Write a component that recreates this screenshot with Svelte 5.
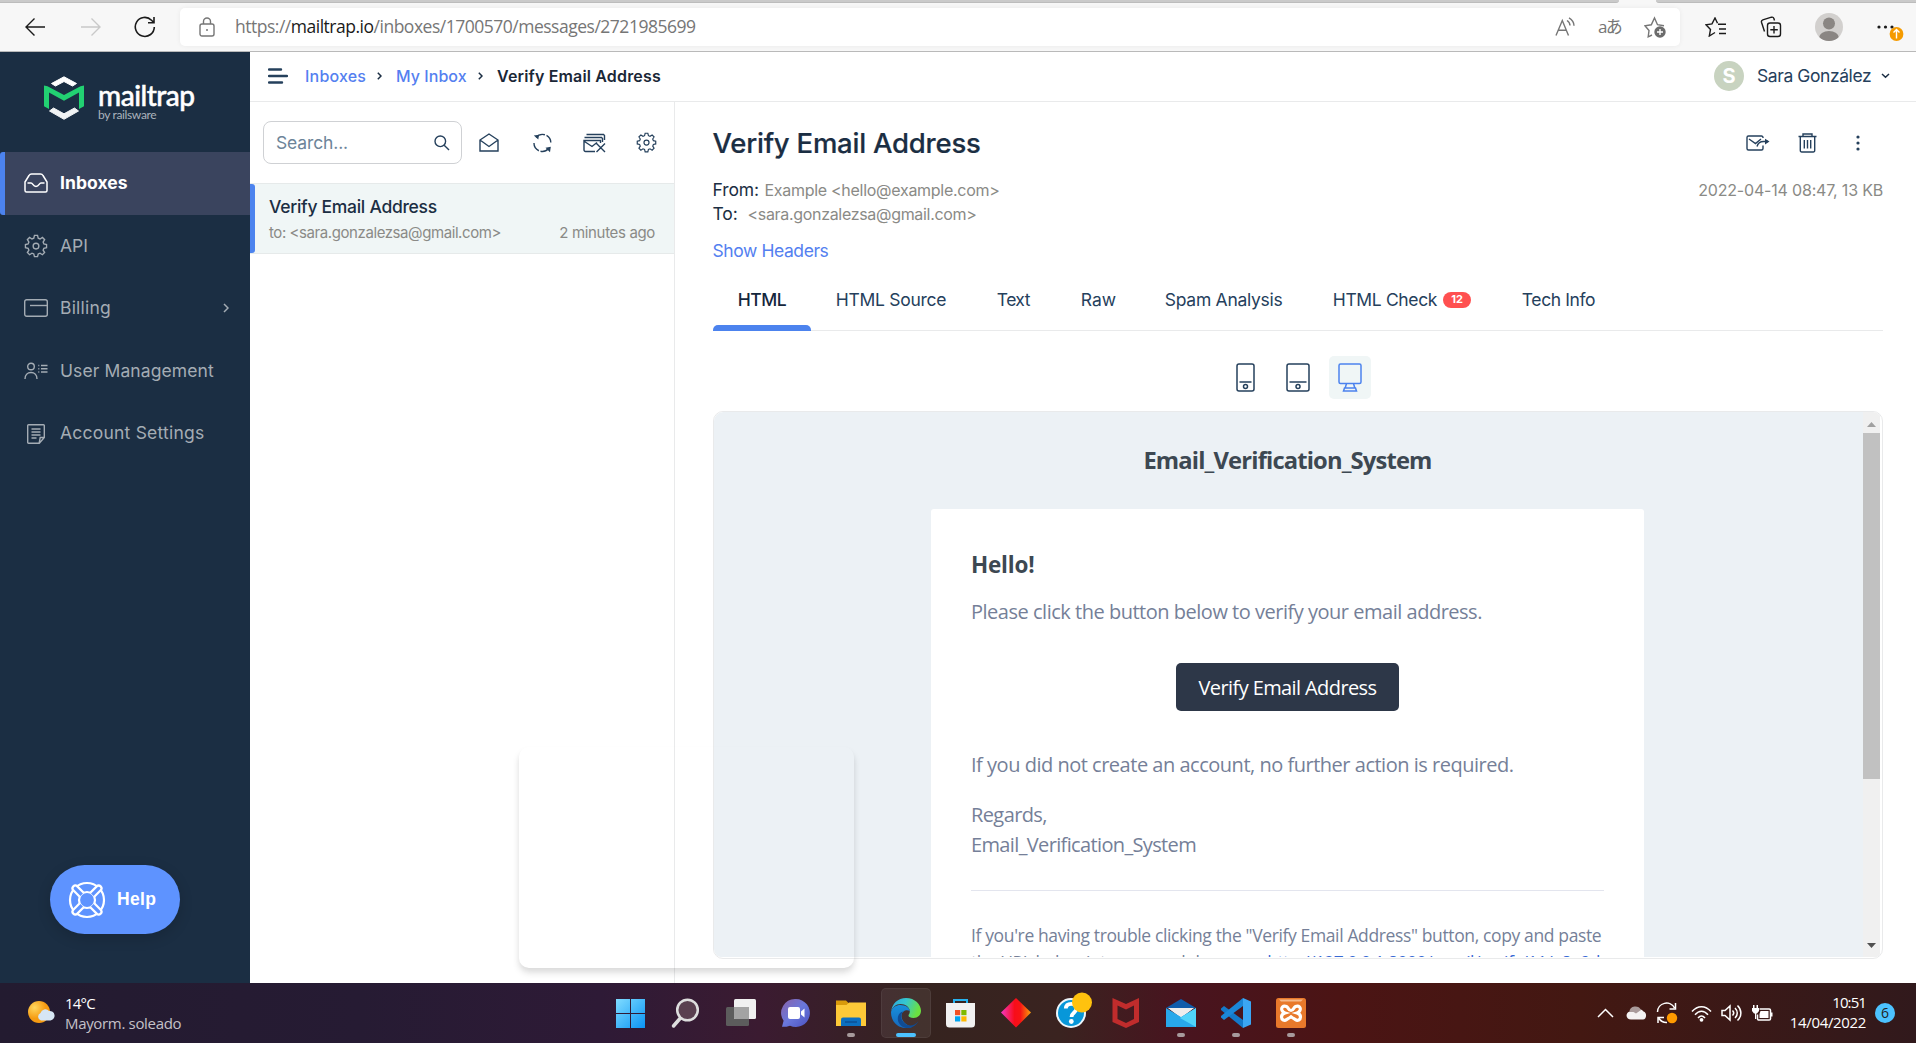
<script>
  const nav = [
    { id: 'api', label: 'API', cls: 'api' },
    { id: 'billing', label: 'Billing', cls: 'billing', arrow: true },
    { id: 'users', label: 'User Management', cls: 'users' },
    { id: 'settings', label: 'Account Settings', cls: 'settings' }
  ];
  const tabs = [
    { label: 'HTML', cls: 'html', active: true },
    { label: 'HTML Source', cls: 'source' },
    { label: 'Text', cls: 'text' },
    { label: 'Raw', cls: 'raw' },
    { label: 'Spam Analysis', cls: 'spam' },
    { label: 'HTML Check', cls: 'check', badge: '12' },
    { label: 'Tech Info', cls: 'tech' }
  ];
  const gear =
    'M10.4 1.5h3.2l.7 2.9 1.9.8 2.5-1.6 2.3 2.3-1.6 2.5.8 1.9 2.8.7v3.2l-2.8.7-.8 1.9 1.6 2.5-2.3 2.3-2.5-1.6-1.9.8-.7 2.8h-3.2l-.7-2.8-1.9-.8-2.5 1.6L3 19.3l1.6-2.5-.8-1.9-2.8-.7V11l2.8-.7.8-1.9L3 5.9l2.3-2.3 2.5 1.6 1.9-.8z';
</script>

<div class="screen">
  <header class="browser">
    <div class="strip"><span class="seg a"></span><span class="seg b"></span></div>
    <div class="toolbar">
      <svg class="back" width="22" height="20" viewBox="0 0 22 20"><path d="M21 10H2M10.5 1.500L2 10l8.500 8.500" /></svg>
      <svg class="fwd" width="22" height="20" viewBox="0 0 22 20"><path d="M1 10h19M11.500 1.500L20 10l-8.500 8.500" /></svg>
      <svg class="reload" width="22" height="22" viewBox="0 0 22 22"><path d="M20.300 11A9.500 9.500 0 1 1 17.500 4.200L19.800 6.500M20 1v5.800h-6" /></svg>
      <div class="address">
        <svg class="lock" width="16" height="20" viewBox="0 0 16 20"><rect x="1" y="7" width="14" height="12" rx="2" /><path d="M4.500 7V4.500a3.500 3.500 0 0 1 7 0V7" /><circle cx="8" cy="13" r="1" class="dot" /></svg>
        <span class="url">https://<b>mailtrap.io</b>/inboxes/1700570/messages/2721985699</span>
        <svg class="read" width="21" height="20" viewBox="0 0 21 20"><path d="M1 18.500L7.300 3.500l6.200 15M3.300 13.300h8M12 3.500c2 1.200 3 3 3 5M14 .8c3.200 1.800 5 4.500 5 8" /></svg>
        <span class="aa">aあ</span>
        <svg class="star" width="22" height="22" viewBox="0 0 22 22"><path d="M8 19l-3.800 1.800.8-6.300L1 9.800l6.300-1L10.500 2l3 6.700 6.500 1" /><circle cx="16" cy="16" r="5.700" class="plus-bg" /><path class="plus" d="M16 13v6M13 16h6" /></svg>
      </div>
      <svg class="fav" width="22" height="20" viewBox="0 0 22 20"><path d="M13 7.300h8M14 12h7M14 16.500h7M10 15.500L4.300 19l1.200-6.500L1 7.800l6-.9L10 1l2.500 5.300" /></svg>
      <svg class="coll" width="22" height="22" viewBox="0 0 22 22"><path d="M4.500 15.500L1.500 6.300a2 2 0 0 1 1.300-2.400L11.500 1.200a2 2 0 0 1 2.400 1.300l.6 2" /><rect x="7.500" y="7" width="13" height="13.500" rx="2.500" /><path d="M14 10v7.500M10.300 13.700h7.500" /></svg>
      <svg class="person" width="28" height="28" viewBox="0 0 28 28"><clipPath id="pc"><circle cx="14" cy="14" r="14" /></clipPath><g clip-path="url(#pc)"><rect width="28" height="28" fill="#d2d0ce" /><circle cx="14" cy="10.500" r="6" fill="#8a8683" /><ellipse cx="14" cy="25" rx="10" ry="7" fill="#8a8683" /></g></svg>
      <svg class="more" width="28" height="26" viewBox="0 0 28 26"><circle cx="3" cy="9" r="1.600" /><circle cx="9.500" cy="9" r="1.600" /><circle cx="16" cy="9" r="1.600" /><circle cx="20.500" cy="16" r="6.900" fill="#f59b00" /><path d="M20.500 20.500v-8.500M17.500 14.500l3-3 3 3" fill="none" stroke="#fff" stroke-width="1.400" /></svg>
    </div>
  </header>

  <div class="app">
    <aside class="side">
      <div class="logo">
        <svg width="40" height="46" viewBox="0 0 40 46">
          <path d="M7.500 8.500L20 1.800l12.500 6.700L28.500 11 20 6.500 11.500 11z" fill="#fff" stroke="#fff" stroke-linejoin="round" />
          <path d="M5.500 36L20 44.300 34.500 36l-4-3-10.500 5.800L9.500 33z" fill="#f1f3f4" stroke="#f1f3f4" stroke-linejoin="round" />
          <path d="M0 10.500l3.500.8L20 20l16.500-8.700 3.500-.8v20.800l-5 2.700V17.500L20 25.800 5 17.500V34l-5-2.700z" fill="#22d172" />
        </svg>
        <div class="words"><span class="name">mailtrap</span><span class="by">by railsware</span></div>
      </div>
      <nav>
        <a class="row active" href="#inboxes">
          <svg width="24" height="20" viewBox="0 0 24 20"><path d="M1 9l4-6.500A3 3 0 0 1 7.500 1h9A3 3 0 0 1 19 2.500L23 9v8.500a1.500 1.500 0 0 1-1.500 1.500h-19A1.500 1.500 0 0 1 1 17.500zM3.500 10H7c2 0 1.800 3.500 5 3.500S15 10 17 10h3.500" /></svg>
          <span>Inboxes</span>
        </a>
        {#each nav as n}
          <a class="row {n.cls}" href="#{n.id}">
            {#if n.id === 'api'}
              <svg width="24" height="24" viewBox="0 0 24 25"><path d={gear} /><circle cx="12" cy="12.600" r="3" /></svg>
            {:else if n.id === 'billing'}
              <svg width="24" height="18" viewBox="0 0 24 18"><rect x=".7" y=".7" width="22.600" height="16.600" rx="2" /><path d="M6 6.500h17" /></svg>
            {:else if n.id === 'users'}
              <svg width="24" height="18" viewBox="0 0 24 18"><circle cx="7" cy="4.500" r="3.300" /><path d="M1 17c0-4 2.500-6.500 6-6.500s6 2.500 6 6.500M17 3.500h6.500M17 6.700h6.500M17 10h6.500M14.300 3.500h1M14.300 6.700h1M14.300 10h1" /></svg>
            {:else}
              <svg width="24" height="20" viewBox="0 0 24 20"><path d="M4.500.7h15A.8.8 0 0 1 20.300 1.500v12l-5 5.800H4.500a.8.8 0 0 1-.8-.8v-17A.8.8 0 0 1 4.500.7zM7.500 5h9M7.500 8h9M7.500 11h9M7.500 14h5M20 13.500h-3.800l-1 5.500" /></svg>
            {/if}
            <span>{n.label}</span>
            {#if n.arrow}<svg class="arrow" width="6" height="10" viewBox="0 0 6 10"><path d="M1 1l4 4-4 4" /></svg>{/if}
          </a>
        {/each}
      </nav>
      <button class="help">
        <svg width="38" height="38" viewBox="0 0 38 38"><circle cx="19" cy="19" r="17" /><circle cx="19" cy="19" r="8" />
          <g class="straps">
            {#each [45, 135, 225, 315] as a}<path transform="rotate({a} 19 19)" d="M16.200 11.500V2.500a2.800 2.800 0 0 1 5.600 0v9" />{/each}
          </g>
        </svg>
        <span>Help</span>
      </button>
    </aside>

    <div class="main">
      <div class="top">
        <svg class="burger" width="20" height="16" viewBox="0 0 20 16"><path d="M1 1.500h12M1 8h18M1 14.500h13" /></svg>
        <a class="c1" href="#i">Inboxes</a>
        <svg class="sep" width="5" height="8" viewBox="0 0 5 8"><path d="M.8.800L4 4 .8 7.200" /></svg>
        <a class="c2" href="#m">My Inbox</a>
        <svg class="sep" width="5" height="8" viewBox="0 0 5 8"><path d="M.8.800L4 4 .8 7.200" /></svg>
        <strong>Verify Email Address</strong>
        <span class="avatar">S</span>
        <span class="who">Sara González</span>
        <svg class="down" width="9" height="6" viewBox="0 0 9 6"><path d="M1 1l3.500 3.300L8 1" /></svg>
      </div>

      <div class="split">
        <section class="list">
          <div class="tools">
            <div class="search"><span>Search...</span><svg width="16" height="16" viewBox="0 0 16 16"><circle cx="6.300" cy="6.300" r="5.300" /><path d="M10.200 10.200L15 15" /></svg></div>
            <svg class="i1" width="20" height="20" viewBox="0 0 20 20"><path d="M1 7L10 1l9 6V18H1zM1 7l9 6.500L19 7" /></svg>
            <svg class="i2" width="19" height="20" viewBox="0 0 19 20"><path d="M3.200 4.500A8.200 8.200 0 0 1 17.800 9.500M1 10a8.200 8.200 0 0 0 14.500 5.500" stroke-dasharray="9.500 1.800" /><path class="fill" d="M.8 2.500l5.200-.8L5.300 6.500zM17.800 13.800l-5.300 1 4.500 4.500z" /></svg>
            <svg class="i3" width="23" height="20" viewBox="0 0 23 20"><path d="M12 18.500H2.500A1.500 1.500 0 0 1 1 17V7.500h16.500V10M1.500 8.500l7.500 5 5-4M1.500 4.500h17l1 1V9M3.500 1.500h17l1 1V7M13.500 10.500l8.500 8.500M22 10.500L13.500 19" /></svg>
            <svg class="i4" width="21" height="21" viewBox="0 0 24 25"><path d={gear} /><circle cx="12" cy="12.600" r="3" /></svg>
          </div>
          <article class="item">
            <h3>Verify Email Address</h3>
            <div class="sub"><span class="to">to: &lt;sara.gonzalezsa@gmail.com&gt;</span><span class="ago">2 minutes ago</span></div>
          </article>
        </section>

        <section class="message">
          <div class="head">
            <h1>Verify Email Address</h1>
            <svg class="m1" width="24" height="16" viewBox="0 0 24 16"><path d="M17 3V2.500A1.500 1.500 0 0 0 15.500 1h-13A1.500 1.500 0 0 0 1 2.500v11A1.500 1.500 0 0 0 2.500 15h13a1.500 1.500 0 0 0 1.500-1.500v-3M3 4l6.500 4.500L15 4M11 11.500c1-3.500 3.500-5 6.500-5H22" /><path class="fill" d="M19 3.800L23.500 6.500 19 9.500z" /></svg>
            <svg class="m2" width="19" height="20" viewBox="0 0 19 20"><path d="M.5 3.500h18M5 3V1h9v2M2.300 3.500v13.800A1.500 1.500 0 0 0 3.800 19h11.400a1.500 1.500 0 0 0 1.500-1.700V3.500M6.300 7v8.500M9.500 7v8.500M12.700 7v8.500" /></svg>
            <svg class="m3" width="4" height="16" viewBox="0 0 4 16"><circle cx="2" cy="2" r="1.600" /><circle cx="2" cy="8" r="1.600" /><circle cx="2" cy="14" r="1.600" /></svg>
          </div>
          <div class="meta"><span class="k">From:</span><span class="v from">Example &lt;hello@example.com&gt;</span><span class="date">2022-04-14 08:47, 13 KB</span></div>
          <div class="meta second"><span class="k">To:</span><span class="v rcpt">&lt;sara.gonzalezsa@gmail.com&gt;</span></div>
          <a class="headers" href="#h">Show Headers</a>
          <div class="tabs">
            {#each tabs as t}
              <span class="tab {t.cls}" class:active={t.active}>{t.label}{#if t.badge}<em>{t.badge}</em>{/if}</span>
            {/each}
          </div>
          <div class="devices">
            <span><svg width="20" height="30" viewBox="0 0 20 30"><rect x="1" y="1" width="17" height="27" rx="2" /><path d="M3.500 19h12" /><circle cx="9.500" cy="23.500" r="2" /></svg></span>
            <span><svg width="24" height="30" viewBox="0 0 24 30"><rect x="1" y="1" width="22" height="27" rx="2" /><path d="M3.500 19h17" /><circle cx="12" cy="23.500" r="2" /></svg></span>
            <span class="on"><svg width="24" height="30" viewBox="0 0 24 30"><rect x="1" y="1" width="22" height="19.500" rx="1.500" /><path d="M8.500 20.500l-1.300 4.500h9.600l-1.300-4.500M6.500 25h11l1 3h-13z" /></svg></span>
          </div>
          <div class="frame">
            <div class="email">
              <h2>Email_Verification_System</h2>
              <div class="card">
                <h4>Hello!</h4>
                <p class="p1">Please click the button below to verify your email address.</p>
                <button>Verify Email Address</button>
                <p class="p2">If you did not create an account, no further action is required.</p>
                <p class="p3">Regards,<br /><span>Email_Verification_System</span></p>
                <hr />
                <p class="small">If you're having trouble clicking the "Verify Email Address" button, copy and paste<br /><span>the URL below into your web browser: <a href="#v">http://127.0.0.1:8000/email/verify/11/e8a9d</a></span></p>
              </div>
            </div>
            <div class="scroll">
              <svg width="9" height="5" viewBox="0 0 9 5"><path d="M4.500 0L9 5H0z" fill="#a0a0a0" /></svg>
              <i></i>
              <svg class="dn" width="9" height="5" viewBox="0 0 9 5"><path d="M0 0h9L4.500 5z" fill="#505050" /></svg>
            </div>
          </div>
        </section>
      </div>
    </div>
  </div>

  <div class="ghost"></div>

  <footer class="taskbar">
    <div class="weather">
      <svg width="27" height="26" viewBox="0 0 27 26"><defs><radialGradient id="sun" cx=".3" cy=".3"><stop offset="0" stop-color="#ffd75e" /><stop offset="1" stop-color="#f59b12" /></radialGradient></defs><circle cx="11" cy="12" r="11" fill="url(#sun)" /><path d="M13 20.500a4 4 0 0 1-.5-7.500 5 5 0 0 1 8.500-2 4.800 4.800 0 0 1 1.500 9.500z" fill="#d6e6f4" /></svg>
      <div><span class="deg">14°C</span><span class="cond">Mayorm. soleado</span></div>
    </div>

    <div class="apps">
      <span class="slot"><svg viewBox="0 0 30 30"><defs><linearGradient id="win" x1="0" y1="0" x2="1" y2="1"><stop offset="0" stop-color="#80dcff" /><stop offset="1" stop-color="#0a94f5" /></linearGradient></defs><path d="M0 1h14v14H0zM15 1h14v14H15zM0 16h14v14H0zM15 16h14v14H15z" fill="url(#win)" /></svg></span>
      <span class="slot"><svg viewBox="0 0 30 30"><circle cx="16.500" cy="12" r="10.300" fill="#5a4050" stroke="#dedede" stroke-width="2.500" /><path d="M2.500 28L9 20.500" stroke="#dedede" stroke-width="3.500" stroke-linecap="round" /></svg></span>
      <span class="slot"><svg viewBox="0 0 30 30"><rect x="0" y="9" width="23" height="19" rx="1.500" fill="#5c5c5c" /><rect x="8" y="1" width="22" height="20" rx="1.500" fill="#f0f0f0" /><path d="M8 9h15v12H9.500A1.500 1.500 0 0 1 8 19.500z" fill="#a3a3a3" /></svg></span>
      <span class="slot"><svg viewBox="0 0 30 30"><defs><linearGradient id="chat" x1="0" y1="0" x2="1" y2="1"><stop offset="0" stop-color="#8a62a8" /><stop offset=".5" stop-color="#6a78dc" /><stop offset="1" stop-color="#4b50c0" /></linearGradient></defs><path d="M15 1a14 14 0 1 1-6 26.700C6 28.800 3 29 1 28.800l1.600-6A14 14 0 0 1 15 1z" fill="url(#chat)" /><rect x="7" y="9" width="12" height="12" rx="2" fill="#fff" /><path d="M20 13.500l3.500-3v9l-3.500-3z" fill="#fff" /></svg></span>
      <span class="slot run"><svg viewBox="0 0 30 30"><path d="M0 2.500h10l3 3V9H0z" fill="#d99a0b" /><path d="M0 7h10.500l2.500-2.500H30V28H0z" fill="#fdc938" /><path d="M5 28v-6.500a2 2 0 0 1 2-2h16a2 2 0 0 1 2 2V28z" fill="#0c6fc0" /><path d="M9 24h12" stroke="#0b4f96" stroke-width="1.500" /></svg></span>
      <span class="slot current"><svg viewBox="0 0 30 30"><defs><linearGradient id="eg" x1="0" y1="0" x2="1" y2=".3"><stop offset="0" stop-color="#2aa5e0" /><stop offset=".5" stop-color="#35c7d0" /><stop offset="1" stop-color="#6be03f" /></linearGradient><linearGradient id="eb" x1="0" y1="0" x2="0" y2="1"><stop offset="0" stop-color="#1790dc" /><stop offset="1" stop-color="#1668bc" /></linearGradient></defs><path d="M0 14C1 5.500 7 0 15 0c9 0 15 6.500 15 12.800 0 4.400-3.300 7.200-7.500 7.200-4 0-5-1.800-5-2.600 0-1 1.300-1.300 1.300-4.200 0-4-4.300-7.200-9.300-7.200C5 6 1 9.500 0 14z" fill="url(#eg)" /><path d="M0 14c1-4.500 5-7 9.500-7 5 0 9.300 2.800 9.300 6.200-2-2.200-8.300-1-8.300 4.800 0 6 6 9.800 10.500 11-9 3.500-21-1.500-21-15z" fill="url(#eb)" /><path d="M12.500 13.500c-4 3-2.500 9.500 2 12.500 4 2.500 9 2 13-3-4 7-9.500 7.500-13.500 6.800-5.500-2-8-6.800-7-11 .6-3 2.500-4.800 5.500-5.300z" fill="#0f4c94" /></svg></span>
      <span class="slot"><svg viewBox="0 0 30 30"><path d="M8 6V2h13v4" fill="none" stroke="#28b2ef" stroke-width="2" /><path d="M0 5h29v21a3.500 3.500 0 0 1-3.500 3.500h-22A3.500 3.500 0 0 1 0 26z" fill="#f1f1f1" /><path d="M9 12h5.200v5.200H9z" fill="#f25022" /><path d="M15.300 12h5.200v5.200h-5.200z" fill="#7fba00" /><path d="M9 18.300h5.200v5.200H9z" fill="#00a4ef" /><path d="M15.300 18.300h5.200v5.200h-5.200z" fill="#ffb900" /></svg></span>
      <span class="slot"><svg viewBox="0 0 30 30"><defs><linearGradient id="dia"><stop offset="0" stop-color="#f339c4" /><stop offset=".45" stop-color="#f70d1a" /><stop offset=".65" stop-color="#f71414" /><stop offset="1" stop-color="#fba20b" /></linearGradient></defs><path d="M15 0l15 14.500L15 29.500 0 14.500z" fill="url(#dia)" /></svg></span>
      <span class="slot"><svg class="q" viewBox="0 0 30 30"><circle cx="15" cy="15" r="14" fill="#0797d9" stroke="#eef6fa" stroke-width="2" /><path d="M9.800 10.500c.2-3.200 2.400-4.700 5.400-4.700 3 0 5.300 1.800 5.300 4.600 0 4.100-4.900 4-5 8.600" fill="none" stroke="#fff" stroke-width="3.800" /><circle cx="15.300" cy="23.500" r="2.400" fill="#fff" /><circle cx="26" cy="4.500" r="10" fill="#ffc20e" /></svg></span>
      <span class="slot"><svg viewBox="0 0 30 30"><path d="M1.500 0L15 6l13-6v24L15 30 1.500 24zM6.500 7.500V21l8.500 4 8-4V7.500l-8 4z" fill="#c02c2c" fill-rule="evenodd" /></svg></span>
      <span class="slot run"><svg viewBox="0 0 30 30"><path d="M0 10L15 1l15 9z" fill="#0f5cab" /><path d="M2 10h26L15 20z" fill="#f2f2f2" /><path d="M0 10l15 9 15-9v19H0z" fill="#28a8ea" /><path d="M2.500 10h25L15 18.500z" fill="#ededed" /><path d="M30 10L14 20l16 9z" fill="#50d4fa" /></svg></span>
      <span class="slot run"><svg viewBox="0 0 30 30"><path d="M0 10.500L3 8l19 14v8L0 12z" fill="#1479c9" /><path d="M0 19.500L3 22 22 8V0L0 18z" fill="#1b87d8" /><path d="M22 0l8 3.500v23L22 30z" fill="#3ba6f3" /></svg></span>
      <span class="slot run"><svg viewBox="0 0 30 30"><rect width="30" height="30" rx="2.500" fill="#e8792b" /><path d="M3 1.500h24l-2 2H5z" fill="#f6b98a" /><path d="M10.500 8.500c-3.500-1.300-5.500 1-4.500 3.800.8 2 3 2.700 3 2.700s-3.500 1-3.500 4 3 4 5 2.700 4.500-3 4.500-3 2.500 1.700 4.500 3 5 .3 5-2.700-3.500-4-3.500-4 2.200-.7 3-2.700c1-2.800-1-5.100-4.500-3.800-2 .8-1.500 4-4.500 4s-2.500-3.200-4.500-4z" fill="none" stroke="#fff" stroke-width="3.200" /></svg></span>
    </div>

    <div class="tray">
      <svg class="t1" width="17" height="10" viewBox="0 0 17 10"><path d="M1 9l7.500-7.500L16 9" /></svg>
      <svg class="t2" width="21" height="14" viewBox="0 0 21 14"><path class="cl2" d="M8 6c2-3 7-4 9.500-.5C21 6 21 13.500 17 13.500H5C-.5 13.500-1 6.500 4 5.500c2-.3 3 0 4 .5z" /><path class="cl1" d="M3.500 6a5 5 0 0 1 5-5.500C11 .2 14 1 15 4L10 7.500 7.500 6z" /></svg>
      <svg class="t3" width="22" height="22" viewBox="0 0 22 22"><path d="M1.500 10A9 9 0 0 1 18.500 6M19.500 1v6h-6M2 21v-5.500h6M3 16.500a9 9 0 0 0 8 4" /><circle cx="16" cy="16" r="5.200" /></svg>
      <svg class="t4" width="21" height="17" viewBox="0 0 21 17"><path d="M1 6.500c5.500-6.500 13.500-6.500 19 0M4 9.800c4-4.800 9-4.800 13 0M7 13c2.300-2.700 4.700-2.700 7 0" /><circle cx="10.500" cy="14.800" r="1.900" /></svg>
      <svg class="t5" width="21" height="18" viewBox="0 0 21 18"><path d="M1 6.500h3L9 2v14l-5-4.500H1zM11.500 6.500c1.500 1.500 1.500 3.500 0 5M14 4c3 3 3 7 0 10M16.500 1.500c4.500 4.500 4.500 10.500 0 15" /></svg>
      <svg class="t6" width="21" height="16" viewBox="0 0 21 16"><path d="M7.500 4h9.700A1.300 1.300 0 0 1 18.500 5.300v8.400A1.300 1.300 0 0 1 17.200 15H6.800A1.300 1.300 0 0 1 5.500 13.700V9.500" /><path class="fill" d="M8.500 6h8v7h-9v-4zM19 7.500h1.500v4H19zM0 3h7v3L5 8.500H2L0 6zM1 0h1.500v3H1zM4.500 0H6v3H4.500zM3 8h1.200v6H3z" /></svg>
      <div class="clock"><span class="time">10:51</span><span class="day">14/04/2022</span></div>
      <span class="count">6</span>
    </div>
  </footer>
</div>

<style>
  :global(body) { background: #fff; overflow: hidden; }
  * { box-sizing: border-box; }
  h1, h2, h3, h4, p { margin: 0; }
  a { text-decoration: none; }
  svg { flex: none; fill: none; }
  .screen { position: relative; width: 1916px; height: 1043px; display: flex; flex-direction: column; overflow: hidden; font-family: Inter, "Liberation Sans", sans-serif; white-space: nowrap; }

  /* browser chrome */
  .browser { height: 52px; background: #f7f7f7; border-bottom: 1px solid #b9b9b9; display: flex; flex-direction: column; }
  .strip { height: 3px; display: flex; justify-content: space-between; }
  .seg { background: #cacaca; border-bottom: 1px solid #bcbcbc; }
  .seg.a { width: 1619px; border-bottom-right-radius: 3px; }
  .seg.b { width: 260px; border-bottom-left-radius: 3px; }
  .toolbar { flex: 1; display: flex; align-items: center; padding: 0 0 1px 24px; }
  .toolbar svg { stroke: #1b1b1b; stroke-width: 1.400; }
  .toolbar .fwd { stroke: #c9c9c9; margin-left: 34px; }
  .toolbar .reload { margin-left: 32px; stroke-width: 1.600; }
  .address { width: 1500px; height: 38px; margin: 0 0 0 24px; background: #fff; border-radius: 5px; box-shadow: 0 0 5px rgba(0,0,0,.06); display: flex; align-items: center; }
  .address svg { stroke: #767676; }
  .address .lock { margin-left: 19px; }
  .lock .dot { fill: #767676; stroke: none; }
  .url { width: 464px; margin-left: 20px; padding-bottom: 1px; font: 17.5px "Open Sans", sans-serif; letter-spacing: -.489px; color: #767676; }
  .url b { font-weight: 400; color: #1a1a1a; }
  .address .read { margin-left: 856px; }
  .aa { width: 23px; margin-left: 22px; font: 17px "Open Sans", "Noto Sans CJK JP", sans-serif; color: #767676; line-height: 20px; letter-spacing: -1.800px; }
  .address .star { margin-left: 23px; }
  .star .plus-bg { fill: #6b6b6b; stroke: none; }
  .star .plus { stroke: #fff; }
  .fav { margin-left: 25px; }
  .coll { margin-left: 33px; }
  .toolbar .person { margin-left: 33px; stroke: none; }
  .toolbar .more { margin-left: 33px; stroke: none; fill: #1b1b1b; margin-top: 8px; }

  .app { flex: 1; display: flex; min-height: 0; }

  /* sidebar */
  .side { width: 250px; background: #1b2e43; display: flex; flex-direction: column; }
  .logo { height: 100px; display: flex; align-items: flex-start; padding: 23px 0 0 44px; }
  .words { display: flex; flex-direction: column; margin-left: 14px; color: #fff; font-family: Lato, sans-serif; }
  .name { font-size: 28px; font-weight: 500; line-height: 28px; margin-top: 6px; letter-spacing: -.5px; -webkit-text-stroke: .5px #fff; }
  .by { font-size: 12px; line-height: 11px; color: #aab3bc; letter-spacing: -.35px; }
  nav { display: flex; flex-direction: column; }
  .row { height: 62.600px; display: flex; align-items: center; padding-left: 24px; gap: 12px; color: #a4acb4; font-size: 17.5px; }
  .row span { padding-bottom: 2px; }
  .row.api span { padding-bottom: 0; }
  .row svg { stroke: #a4acb4; stroke-width: 1.400; }
  .row.active { background: #3a445e; color: #fff; font-weight: 700; border-left: 5px solid #4c83ee; padding-left: 19px; border-radius: 3px 0 0 3px; letter-spacing: .05px; }
  .row.active svg { stroke: #fff; stroke-width: 1.500; }
  .billing { letter-spacing: .2px; }
  .users { letter-spacing: .1px; }
  .settings { letter-spacing: .22px; }
  .row .arrow { margin-left: auto; margin-right: 21px; stroke-width: 1.500; }
  .help { margin: auto 0 49px 50px; width: 130px; height: 69px; border: 0; border-radius: 35px; background: #5e93ff; box-shadow: 0 4px 14px rgba(0,0,0,.16); display: flex; align-items: center; padding: 0 0 0 18px; gap: 11px; color: #fff; font: 700 17.5px "Liberation Sans", sans-serif; letter-spacing: .3px; }
  .help svg { stroke: #fff; stroke-width: 2.200; }
  .straps path { fill: #5e93ff; }

  /* top bar */
  .main { flex: 1; display: flex; flex-direction: column; min-width: 0; }
  .top { height: 50px; border-bottom: 1px solid #e9eaeb; display: flex; align-items: center; padding: 0 0 2px 18px; font-size: 16px; font-weight: 500; }
  .top svg { stroke: #1b2e43; stroke-width: 1.500; }
  .top .burger { stroke-width: 2.400; stroke: #25405c; stroke-linecap: round; }
  .top a { color: #5480f0; font-weight: 500; }
  .c1 { margin-left: 17px; width: 60px; letter-spacing: .2px; }
  .c2 { width: 70px; letter-spacing: .05px; }
  .sep { margin: 0 14px 0 12px; }
  .top strong { font-weight: 600; color: #1a2737; letter-spacing: .16px; }
  .avatar { margin-left: auto; width: 30px; height: 30px; border-radius: 50%; background: #c8d3c0; color: #fff; font: 700 20px/30px Inter, sans-serif; text-align: center; }
  .who { margin-left: 13px; width: 115px; font-size: 17.5px; font-weight: 400; letter-spacing: -.42px; color: #25405c; }
  .down { margin: 0 26px 0 9px; }

  .split { flex: 1; display: flex; min-height: 0; }

  /* message list */
  .list { width: 425px; border-right: 1px solid #e9eaeb; }
  .tools { height: 81px; display: flex; align-items: center; padding-left: 13px; }
  .tools svg { stroke: #25405c; stroke-width: 1.400; }
  .fill { fill: #25405c; stroke: none; }
  .search { width: 199px; height: 43px; border: 1px solid #cfd1d4; border-radius: 8px; display: flex; align-items: center; justify-content: space-between; padding: 0 11px 0 12px; font-size: 17.5px; letter-spacing: -.14px; color: #6d8499; }
  .i1 { margin-left: 17px; }
  .i2 { margin-left: 34px; }
  .i3 { margin-left: 31px; }
  .i4 { margin-left: 30px; }
  .item { height: 71px; background: #f0f6f6; border-top: 1px solid #e6eaea; border-bottom: 1px solid #e6eaea; padding: 11px 19px 0 19px; position: relative; }
  .item::before { content: ""; position: absolute; left: 0; top: 0; width: 5px; height: 69px; background: #4c83ee; border-radius: 0 3px 3px 0; }
  h3 { font-size: 17.5px; font-weight: 500; line-height: 23px; letter-spacing: -.28px; color: #1b2e43; }
  .sub { display: flex; justify-content: space-between; margin-top: 4px; font-size: 15px; line-height: 22px; color: #8a8a86; }
  .to { letter-spacing: -.42px; }
  .ago { letter-spacing: -.345px; }

  /* message pane */
  .message { flex: 1; padding: 6px 33px 0 38px; display: flex; flex-direction: column; }
  .head { height: 70px; display: flex; align-items: center; }
  .head svg { stroke: #25405c; stroke-width: 1.400; }
  h1 { flex: 1; font-size: 27.5px; font-weight: 500; letter-spacing: -.23px; color: #1b2e43; -webkit-text-stroke: .2px #1b2e43; text-indent: -.5px; }
  .m2 { margin-left: 28px; }
  .head .m3 { margin: 0 23px 0 39px; fill: #25405c; stroke: none; }
  .meta { height: 24px; display: flex; align-items: center; text-indent: -.5px; }
  .k { width: 52px; font-size: 17.5px; letter-spacing: -.11px; color: #1b2e43; line-height: 22px; padding-bottom: 1px; }
  .second .k { width: 35px; }
  .v { font-size: 16px; color: #8a8a86; }
  .from { letter-spacing: -.285px; }
  .rcpt { letter-spacing: -.315px; }
  .date { margin-left: auto; font-size: 16px; letter-spacing: -.186px; color: #8a8a86; }
  .headers { margin-top: 13px; line-height: 24px; font-size: 17.5px; letter-spacing: -.42px; color: #5480f0; text-indent: -.5px; }
  .tabs { margin-top: 6px; height: 62px; border-bottom: 1px solid #e9eaeb; display: flex; }
  .tab { display: flex; align-items: center; padding: 0 0 2px 24.800px; font-size: 17.5px; color: #25405c; letter-spacing: -.28px; height: 62px; position: relative; }
  .html { width: 98px; font-weight: 500; color: #14263c; letter-spacing: -.475px; }
  .html::after { content: ""; position: absolute; left: 0; right: 0; bottom: 0; height: 6px; background: #4c83ee; border-radius: 5px 5px 0 0; }
  .source { width: 161px; }
  .text { width: 84px; letter-spacing: -.6px; }
  .raw { width: 84px; letter-spacing: 0; }
  .spam { width: 168px; }
  .check { width: 189px; letter-spacing: -.362px; }
  .tech { letter-spacing: -.4px; }
  .tab em { margin: 1px 0 0 6px; width: 28px; height: 16px; border-radius: 8px; background: #ff5050; color: #fff; font: 700 11px/15px Inter, sans-serif; text-align: center; letter-spacing: 0; }
  .devices { margin: 25px 0 12px 512px; height: 43px; display: flex; gap: 10px; }
  .devices span { width: 42px; display: flex; align-items: center; justify-content: center; border-radius: 5px; }
  .devices .on { background: #f0f6f6; }
  .devices svg { stroke: #25405c; stroke-width: 1.500; }
  .devices .on svg { stroke: #4c83ee; }

  .frame { height: 548px; border: 1px solid #e9eaeb; border-radius: 10px; overflow: hidden; display: flex; background: #fff; padding: 0 2px 1px 0; }
  .email { flex: 1; background: #ecf1f5; border-radius: 9px 0 0 7px; overflow: hidden; font-family: "Open Sans", "Noto Sans", sans-serif; padding: 30px 2px 0 0; display: flex; flex-direction: column; align-items: center; }
  h2 { font-size: 23.75px; line-height: 36px; font-weight: 700; letter-spacing: -.85px; color: #3d4852; }
  .card { margin-top: 31px; width: 713px; flex: none; height: 600px; background: #fff; border-radius: 3px; padding: 39px 40px 0; display: flex; flex-direction: column; color: #757f98; font-size: 20px; line-height: 30px; }
  h4 { font-size: 22.5px; line-height: 34px; color: #3d4852; letter-spacing: -.2px; }
  .p1 { margin-top: 15px; letter-spacing: -.485px; }
  .card button { margin: 36px auto 39px; width: 223px; height: 48px; border: 0; border-radius: 5px; background: #2d3748; color: #fff; font: 20px "Open Sans", sans-serif; letter-spacing: -.601px; padding: 0; }
  .p2 { letter-spacing: -.485px; }
  .p3 { margin-top: 20px; letter-spacing: -.6px; }
  .p3 span { letter-spacing: -.64px; }
  hr { width: 633px; height: 1px; border: 0; background: #e3e5ee; margin: 30px 0 31px; }
  .small { font-size: 17.5px; line-height: 27px; letter-spacing: -.37px; }
  .small span { letter-spacing: -.52px; }
  .small a { color: #3869d4; }
  .scroll { width: 17px; background: #f0f0f0; display: flex; flex-direction: column; align-items: center; padding-top: 10px; }
  .scroll i { width: 17px; height: 346px; background: #c1c1c1; margin-top: 6px; }
  .scroll .dn { margin: auto 0 9px; }

  /* transparent floating panel that only casts a shadow */
  .ghost { position: absolute; left: 518.500px; top: 747px; width: 335px; height: 220.500px; border-radius: 10px; box-shadow: 0 5px 7px rgba(0,0,0,.12), 0 3px 5px rgba(0,0,0,.03); }

  /* taskbar */
  .taskbar { height: 60px; flex: none; display: flex; align-items: center; font-family: "Open Sans", sans-serif; font-size: 15px; color: #fff; background: linear-gradient(90deg, #231b30 0, #261b33 360px, #2e1a36 600px, #3b1b31 760px, #35231f 920px, #3a2320 1060px, #48141f 1180px, #4b1414 1340px, #431812 1580px, #35191a 1840px, #31191c 1916px); }
  .weather { width: 590px; padding-left: 28px; display: flex; align-items: center; gap: 10px; }
  .weather div { display: flex; flex-direction: column; line-height: 20px; }
  .deg { letter-spacing: -.8px; }
  .cond { letter-spacing: -.33px; color: #c4c1c8; }
  .apps { display: flex; gap: 5px; padding-left: 16px; }
  .slot { width: 50px; height: 50px; border-radius: 5px; display: flex; justify-content: center; align-items: center; position: relative; }
  .slot svg { width: 30px; height: 30px; overflow: visible; }
  .run::after, .current::after { content: ""; position: absolute; bottom: 1px; width: 8px; height: 4px; border-radius: 2px; background: #a79a9c; }
  .current { background: rgba(255,255,255,.07); border: 1px solid rgba(255,255,255,.06); }
  .current::after { bottom: 0; width: 20px; background: #4cc2ff; }
  .tray { margin-left: auto; display: flex; align-items: center; }
  .tray svg { stroke: #fff; stroke-width: 1.500; }
  .t2 { margin-left: 12px; }
  .tray .t2 { stroke: none; }
  .cl1 { fill: #a99b9b; }
  .cl2 { fill: #f4f2f2; }
  .t3 { margin-left: 9px; }
  .t3 circle { fill: #ff9a00; stroke: none; }
  .t4 { margin-left: 13px; }
  .t4 circle { fill: #fff; stroke: none; }
  .t5 { margin-left: 9px; }
  .t6 { margin-left: 10px; }
  .tray .t6 .fill { fill: #fff; stroke: none; }
  .clock { margin-left: 17px; width: 76px; display: flex; flex-direction: column; align-items: flex-end; line-height: 20px; padding-bottom: 2px; }
  .time { letter-spacing: -.9px; }
  .day { letter-spacing: -.338px; }
  .count { margin: 0 21px 0 9px; width: 20px; height: 20px; border-radius: 50%; background: #4cc2ff; color: #222; font-size: 14px; line-height: 20px; text-align: center; }
</style>
